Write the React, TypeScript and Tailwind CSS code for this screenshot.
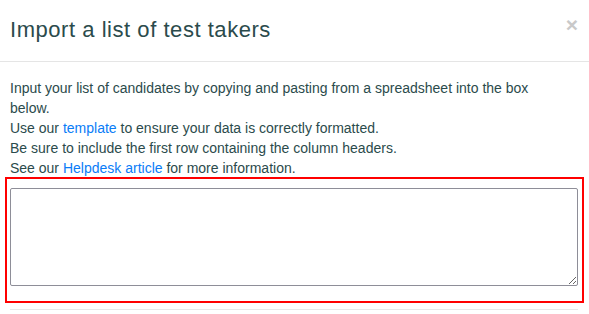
import React from "react";

export default function App() {
  return (
    <div
      className="w-[589px] h-[314px] bg-white overflow-hidden"
      style={{ fontFamily: '"Liberation Sans", Arial, sans-serif' }}
    >
      <div className="flex justify-between items-start h-[62px] border-b border-[#e5e5e5] pl-[10px] pr-[11px] pt-[17px]">
        <h4 className="text-[22px] tracking-[0.54px] leading-[26px] text-[#2b4b4c] font-normal">
          Import a list of test takers
        </h4>
        <button className="text-[21px] leading-[21px] font-bold text-[#c9c9c9] -mt-[3px]">
          ×
        </button>
      </div>
      <div className="pl-[10px] pr-[11px] pt-[16px]">
        <div className="w-[540px] text-[14px] leading-[20px] text-[#2b4b4c]">
          <p>
            Input your list of candidates by copying and pasting from a spreadsheet into the box below.
          </p>
          <p>
            Use our <a className="text-[#0a7cf7]">template</a> to ensure your data is correctly formatted.
          </p>
          <p>Be sure to include the first row containing the column headers.</p>
          <p>
            See our <a className="text-[#0a7cf7]">Helpdesk article</a> for more information.
          </p>
        </div>
        <div className="-mt-[1px] -ml-[5px] -mr-[6px] border-2 border-[#ff0000] pl-[3px] pr-[4px] pt-[9px] pb-[15px]">
          <textarea className="block w-full h-[98px] border border-[#8e8e98] rounded-[2px] resize-y outline-none" />
        </div>
        <div className="mt-[6px] border-t border-[#e8e8e8]" />
      </div>
    </div>
  );
}
